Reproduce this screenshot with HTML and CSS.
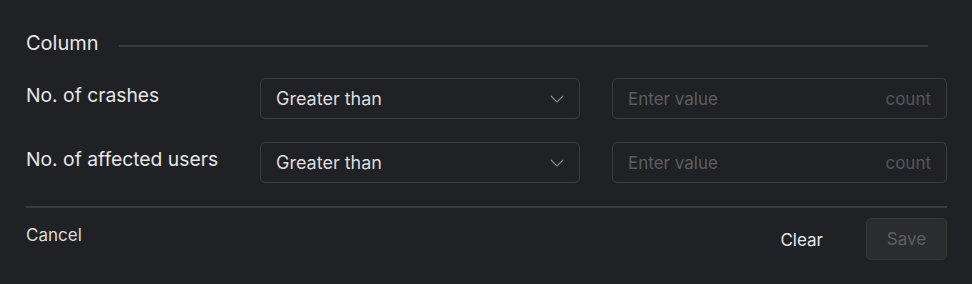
FILE: index.html
```html
<!DOCTYPE html>
<html>
<head>
<meta charset="utf-8">
<link rel="stylesheet" href="styles.css">
</head>
<body>
<div class="panel">
  <div class="section-head">
    <span class="section-title">Column</span>
    <span class="section-line"></span>
  </div>
  <div class="rows">
    <div class="row">
      <div class="label">No. of crashes</div>
      <div class="select">
        <span>Greater than</span>
        <svg class="chev" width="14" height="8" viewBox="0 0 14 8"><path d="M1 1l6 6 6-6" fill="none" stroke="#8a8b8e" stroke-width="1.1"/></svg>
      </div>
      <div class="input">
        <span class="ph">Enter value</span>
        <span class="unit">count</span>
      </div>
    </div>
    <div class="row">
      <div class="label">No. of affected users</div>
      <div class="select">
        <span>Greater than</span>
        <svg class="chev" width="14" height="8" viewBox="0 0 14 8"><path d="M1 1l6 6 6-6" fill="none" stroke="#8a8b8e" stroke-width="1.1"/></svg>
      </div>
      <div class="input">
        <span class="ph">Enter value</span>
        <span class="unit">count</span>
      </div>
    </div>
  </div>
  <div class="divider"></div>
  <div class="footer">
    <span class="cancel">Cancel</span>
    <div class="actions">
      <span class="clear">Clear</span>
      <span class="save">Save</span>
    </div>
  </div>
</div>
</body>
</html>
```
FILE: styles.css
```css
*, *::before, *::after { box-sizing: border-box; }
html, body {
  margin: 0;
  padding: 0;
  background: #202124;
  font-family: Inter, "Noto Sans", sans-serif;
  color: #e6e6e7;
}
.panel {
  padding: 30px 25px 0 26px;
  width: 972px;
}
.section-head {
  display: flex;
  align-items: center;
  height: 26px;
  padding-right: 19px;
}
.section-title {
  font-size: 20px;
}
.section-line {
  flex: 1;
  height: 2px;
  background: #3a3b3e;
  margin-left: 20px;
  margin-top: 5px;
}
.rows {
  margin-top: 22px;
  display: flex;
  flex-direction: column;
  gap: 23px;
}
.row {
  display: grid;
  grid-template-columns: 234px 320px 1fr;
  align-items: start;
}
.label {
  font-size: 19.3px;
  margin-top: 5px;
}
.select, .input {
  height: 41px;
  border: 1px solid #3c3d40;
  border-radius: 5px;
  display: flex;
  align-items: center;
  justify-content: space-between;
  padding: 0 15px;
  font-size: 17px;
}
.select {
  color: #dcdcdd;
  font-size: 18px;
}
.input { margin-left: 32px; }
.ph { color: #5c5d60; }
.unit { color: #55565a; }
.divider {
  margin-top: 23px;
  height: 2px;
  background: #3a3b3e;
}
.footer {
  display: flex;
  justify-content: space-between;
  align-items: flex-start;
  margin-top: 10px;
}
.cancel {
  font-size: 17px;
  color: #dcdcdd;
  margin-top: 7px;
}
.actions {
  display: flex;
  align-items: center;
  gap: 43px;
}
.clear {
  font-size: 17px;
  color: #e6e6e7;
  margin-top: 2px;
}
.save {
  width: 81px;
  height: 42px;
  display: flex;
  align-items: center;
  justify-content: center;
  background: #2b2c2e;
  border: 1px solid #37383a;
  border-radius: 5px;
  color: #5f6063;
  font-size: 17px;
}
```
